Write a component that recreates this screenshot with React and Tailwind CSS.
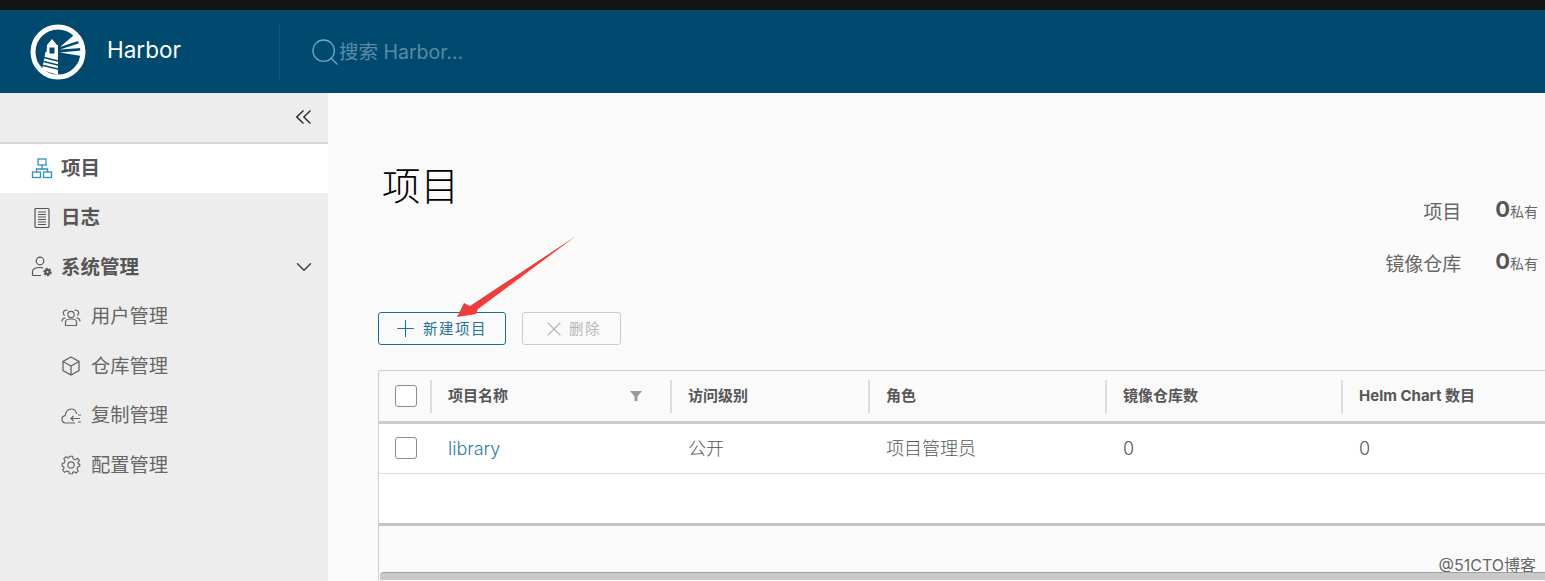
import { ChevronDown, Plus, Search, X } from "lucide-react";

const font = { fontFamily: '"Inter", "Noto Sans CJK SC", sans-serif' };

function HarborLogo() {
  return (
    <svg width="56" height="56" viewBox="0 0 56 56" className="shrink-0">
      <circle cx="28" cy="28" r="25" fill="none" stroke="#fff" strokeWidth="5" />
      <path d="M17 21 L22 15 L27 21 L28 21 L28 51 L12 46 L15.500 28 L16.500 28 Z" fill="#fff" />
      <rect x="19.500" y="23.500" width="5" height="6" fill="#004a70" />
      <path d="M14 33.500 L28 37 M13.500 37.500 L28 41 M13 41.500 L28 45" stroke="#004a70" strokeWidth="1.300" />
      <path d="M30 23 L44 11 L48 17 Z M30 25.500 L50 19 L51.500 24 Z M30 28.500 L51.500 26.500 L51.500 32 Z" fill="#fff" />
    </svg>
  );
}

function OrgIcon() {
  return (
    <svg width="22" height="22" viewBox="0 0 22 22" fill="none" stroke="#2f8fc0" strokeWidth="1.300">
      <rect x="7" y="2" width="8" height="6" />
      <rect x="1.500" y="15" width="8" height="5.500" />
      <rect x="12.500" y="15" width="8" height="5.500" />
      <path d="M11 8 V12 M5.500 15 V12 H16.500 V15" />
    </svg>
  );
}

function LogIcon() {
  return (
    <svg width="22" height="22" viewBox="0 0 22 22" fill="none" stroke="#565656" strokeWidth="1.200">
      <rect x="4" y="1.500" width="14" height="19" rx="1" />
      <path d="M7 5 H15 M7 7.500 H15 M7 10 H15 M7 12.500 H15 M7 15 H15 M7 17.500 H15" />
    </svg>
  );
}

function AdminIcon() {
  return (
    <svg width="22" height="22" viewBox="0 0 22 22" fill="none" stroke="#565656" strokeWidth="1.200">
      <circle cx="9" cy="5" r="3.800" />
      <path d="M1.500 19.500 V16 C1.500 13 5 11.500 9 11.500 C10 11.500 11 11.600 12 11.900 M1.500 19.500 H10" />
      <circle cx="16.500" cy="16" r="3" fill="#565656" stroke="#565656" strokeWidth="2.400" strokeDasharray="2 1" />
      <circle cx="16.500" cy="16" r="1" fill="#ededed" stroke="none" />
    </svg>
  );
}

function UsersIcon() {
  return (
    <svg width="20" height="20" viewBox="0 0 20 20" fill="none" stroke="#666" strokeWidth="1.200">
      <circle cx="10" cy="7.500" r="3.200" />
      <path d="M4.500 18.500 V15 C4.500 13 7 12 10 12 C13 12 15.500 13 15.500 15 V18.500 Z" />
      <path d="M6.500 3.500 A2.600 2.600 0 1 0 3.800 8.500 M13.500 3.500 A2.600 2.600 0 1 1 16.200 8.500 M1 14.500 C1 12 2.500 11 4.500 10.800 M19 14.500 C19 12 17.500 11 15.500 10.800" />
    </svg>
  );
}

function BoxIcon() {
  return (
    <svg width="20" height="20" viewBox="0 0 20 20" fill="none" stroke="#666" strokeWidth="1.300">
      <path d="M10 1 L18 5.500 V14.500 L10 19 L2 14.500 V5.500 Z M2 5.500 L10 10 L18 5.500 M10 10 V19" />
    </svg>
  );
}

function CloudIcon() {
  return (
    <svg width="22" height="20" viewBox="0 0 22 20" fill="none" stroke="#666" strokeWidth="1.200">
      <path d="M14 17 H5 C2.500 17 1 15.300 1 13.300 C1 11.300 2.400 10 4.200 9.700 C4.800 5.700 7.200 3 10.300 3 C13 3 15 5 15.600 7.900" />
      <path d="M10 12.500 H19 M12.500 10 L10 12.500 L12.500 15 M17 9 H20 M17 16 H20" />
    </svg>
  );
}

function GearIcon() {
  return (
    <svg width="20" height="20" viewBox="0 0 24 24" fill="none" stroke="#666" strokeWidth="1.400" strokeLinejoin="round">
      <circle cx="12" cy="12" r="3.800" />
      <path d="M10 1.500 H14 L14.700 4.700 L17 5.700 L19.800 3.900 L22.100 6.500 L20.300 9.200 L21.200 11 L22.500 11 V13.500 L20.200 14.200 L19.300 16.500 L20.700 19.400 L18.100 21.700 L15.500 20 L14 20.600 L13.800 22.500 H10 L9.400 20 L7 19.300 L4.300 20.800 L2 18.200 L3.700 15.600 L3 13.800 L1.500 13.500 V10 L4 9.400 L4.900 7 L3.400 4.400 L6 2.100 L8.500 3.700 L9.600 3.200 Z" />
    </svg>
  );
}

function NavItem({ icon, label, active, chevron }) {
  return (
    <div className={`flex h-[49.500px] items-center pr-[11px] pl-[31px] ${active ? "bg-white" : ""}`}>
      <span className="flex w-[30px] shrink-0">{icon}</span>
      <span className="flex-1 text-[19.500px] font-bold text-[#565656]">{label}</span>
      {chevron && <ChevronDown size={26} strokeWidth={1.400} className="text-[#444]" />}
    </div>
  );
}

function SubItem({ icon, label }) {
  return (
    <div className="flex h-[49.500px] items-center pl-[61px]">
      <span className="flex w-[30px] shrink-0">{icon}</span>
      <span className="text-[19.300px] text-[#666]">{label}</span>
    </div>
  );
}

function HeadCell({ label, children }) {
  return (
    <div className="flex h-[33px] items-center justify-between border-l-2 border-[#dcdcdc] pr-7 pl-4 text-[15px] font-bold text-[#565656]">
      <span>{label}</span>
      {children}
    </div>
  );
}

function Stat({ label }) {
  return (
    <div className="flex h-[52px] items-center justify-end">
      <span className="mt-2 text-[19px] text-[#666]">{label}</span>
      <span className="ml-[34px] text-[22px] font-bold text-[#565656]">0</span>
      <span className="mt-1 text-[14px] text-[#666]">私有</span>
    </div>
  );
}

export default function App() {
  const columns = "grid grid-cols-[51px_240px_198px_237px_236px_300px] items-center";

  return (
    <div style={font} className="relative flex h-[581px] w-[1545px] flex-col overflow-hidden bg-[#fafafa]">
      <div className="h-[10px] shrink-0 bg-[#141414]" />

      <header className="flex h-[83px] shrink-0 items-center bg-[#004a70] pl-[30px]">
        <HarborLogo />
        <span className="ml-[21px] -mt-[3px] w-[172px] text-[22.500px] text-white">Harbor</span>
        <div className="h-[56px] border-l border-[#0d5578]" />
        <div className="ml-[29px] flex items-center">
          <Search size={32} strokeWidth={1} className="text-[#6aa6c8]" />
          <span className="-ml-[2px] mt-[3px] text-[19.500px] text-[#5a8ba6]">搜索 Harbor...</span>
        </div>
      </header>

      <div className="flex min-h-0 flex-1">
        <aside className="w-[328px] shrink-0 bg-[#ededed]">
          <div className="flex h-[50.500px] items-center justify-end border-b-2 border-[#d8d8d8] pr-[17px]">
            <svg width="15" height="14" viewBox="0 0 15 14" fill="none" stroke="#222" strokeWidth="1.300">
              <path d="M7.500 0.500 L0.800 7 L7.500 13.500 M14.500 0.500 L7.800 7 L14.500 13.500" />
            </svg>
          </div>
          <NavItem icon={<OrgIcon />} label="项目" active />
          <NavItem icon={<LogIcon />} label="日志" />
          <NavItem icon={<AdminIcon />} label="系统管理" chevron />
          <SubItem icon={<UsersIcon />} label="用户管理" />
          <SubItem icon={<BoxIcon />} label="仓库管理" />
          <SubItem icon={<CloudIcon />} label="复制管理" />
          <SubItem icon={<GearIcon />} label="配置管理" />
        </aside>

        <main className="min-w-0 flex-1 overflow-hidden pl-[50px]">
          <div className="flex h-[219px] justify-between pr-[7px]">
            <h1 className="mt-[65px] ml-[4px] text-[38.500px] leading-[56px] font-light text-black">项目</h1>
            <div className="pt-[90px]">
              <Stat label="项目" />
              <Stat label="镜像仓库" />
            </div>
          </div>

          <div className="flex gap-4">
            <button className="flex h-[33px] w-[128px] items-center rounded-[3px] border border-[#1a6f8f] pl-[17px] text-[#1f7396]">
              <Plus size={27} strokeWidth={1} className="-m-1 shrink-0" />
              <span className="ml-[8px] text-[14.500px] tracking-[1.500px]">新建项目</span>
            </button>
            <button className="flex h-[33px] w-[99px] items-center rounded-[3px] border border-[#cccccc] pl-[21px] text-[#b5b5b5]">
              <X size={24} strokeWidth={1.100} className="-m-0.5 shrink-0" />
              <span className="ml-[5px] text-[14.500px] tracking-[1.500px]">删除</span>
            </button>
          </div>

          <div className="mt-[25px] w-[1300px] rounded-tl-[3px] border-t border-l border-[#cfcfcf]">
            <div className={`${columns} h-[50px]`}>
              <div className="pl-[16px]">
                <span className="block h-[22px] w-[22px] rounded-[3px] border border-[#8c8c8c] bg-white" />
              </div>
              <HeadCell label="项目名称">
                <svg width="14" height="12" viewBox="0 0 14 12" className="-mr-[1px]">
                  <path d="M1 1 H13 L8.500 6.500 V11 H5.500 V6.500 Z" fill="#9a9a9a" />
                </svg>
              </HeadCell>
              <HeadCell label="访问级别" />
              <HeadCell label="角色" />
              <HeadCell label="镜像仓库数" />
              <HeadCell label="Helm Chart 数目" />
            </div>

            <div className="border-t-[3px] border-[#cccccc] bg-white">
              <div className={`${columns} h-[50px] border-b border-[#dedede] pb-[1px] text-[18px] font-light text-[#565656]`}>
                <div className="pl-[16px]">
                  <span className="block h-[22px] w-[22px] rounded-[3px] border border-[#8c8c8c] bg-white" />
                </div>
                <span className="pl-[18px] text-[#2d7ea5]">library</span>
                <span className="pl-[18px]">公开</span>
                <span className="pl-[18px]">项目管理员</span>
                <span className="pl-[18px]">0</span>
                <span className="pl-[18px]">0</span>
              </div>
              <div className="h-[49px]" />
            </div>

            <div className="h-[49px] border-t-[3px] border-[#c4c4c4]" />
            <div className="ml-px h-[8px] rounded-tl-[4px] border-t border-[#9f9f9f] bg-[#c9c9c9]" />
          </div>
        </main>
      </div>

      <svg width="1545" height="581" className="pointer-events-none absolute top-0 left-0">
        <polygon points="457,317 464,303 470,306 576,236 478,309 476,314" fill="#f23b3b" />
      </svg>
      <span className="absolute top-[553px] right-[9px] text-[16px] text-[#666] [text-shadow:0_0_2px_#fff]">
        @51CTO博客
      </span>
    </div>
  );
}
